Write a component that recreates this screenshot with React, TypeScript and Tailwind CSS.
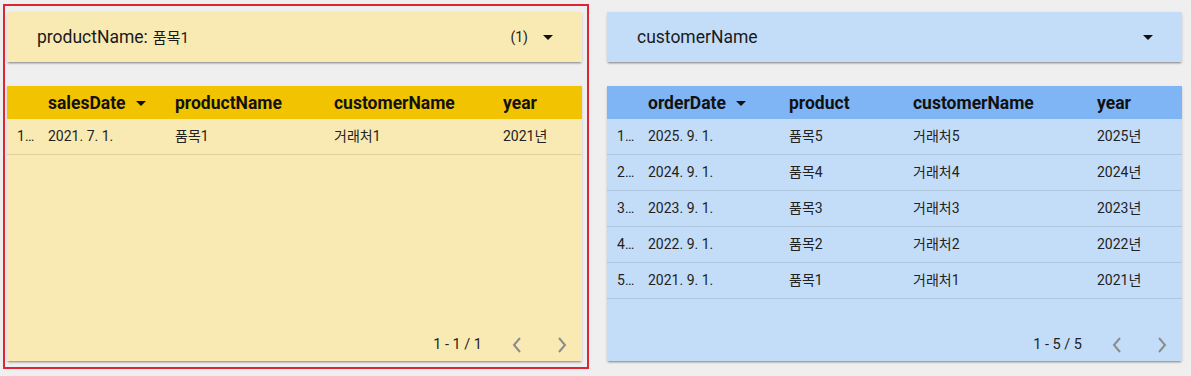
import React from "react";

type Col = { label: string; width: number; sort?: boolean };

const font = { fontFamily: "Roboto, 'Noto Sans CJK KR', sans-serif" };

function Caret({ className = "" }: { className?: string }) {
  return (
    <svg width="10" height="5" viewBox="0 0 10 5" className={className}>
      <path d="M0 0h10L5 5z" fill="#111" />
    </svg>
  );
}

function Chevron({ dir }: { dir: "left" | "right" }) {
  return (
    <svg width="10" height="16" viewBox="0 0 10 16">
      <path
        d={dir === "left" ? "M8 1L2 8l6 7" : "M2 1l6 7-6 7"}
        fill="none"
        stroke="#8c8c8c"
        strokeWidth="2"
      />
    </svg>
  );
}

function FilterCard({
  bg,
  label,
  value,
  count,
}: {
  bg: string;
  label: string;
  value?: string;
  count?: string;
}) {
  return (
    <div
      className={`w-[575px] h-[50px] flex items-center pl-[30px] pr-[29px] shadow-[0_2px_2px_-1px_rgba(0,0,0,0.4),0_1px_3px_rgba(0,0,0,0.1)] ${bg}`}
    >
      <span className="text-[17.5px] text-[#1a1a1a]">
        {label}
        {value && (
          <>
            :<span className="text-[15px] ml-[5px]">{value}</span>
          </>
        )}
      </span>
      <div className="ml-auto flex items-center gap-[15px]">
        {count && <span className="text-[14px] text-[#222]">{count}</span>}
        <Caret />
      </div>
    </div>
  );
}

function DataTable({
  bg,
  headBg,
  cols,
  rows,
  pageText,
}: {
  bg: string;
  headBg: string;
  cols: Col[];
  rows: string[][];
  pageText: string;
}) {
  return (
    <div
      className={`w-[575px] h-[275px] flex flex-col shadow-[0_2px_2px_-1px_rgba(0,0,0,0.4),0_1px_3px_rgba(0,0,0,0.1)] ${bg}`}
    >
      <div className={`h-[33px] pt-[1px] flex items-center ${headBg}`}>
        <div className="w-[41px] shrink-0" />
        {cols.map((c) => (
          <div
            key={c.label}
            style={{ width: c.width }}
            className="shrink-0 flex items-center gap-[10px] text-[17.5px] font-bold text-[#111]"
          >
            {c.label}
            {c.sort && <Caret />}
          </div>
        ))}
      </div>
      {rows.map((r, i) => (
        <div
          key={i}
          className="h-[36px] flex items-center border-b border-black/10 text-[14px] text-[#222]"
        >
          <div className="w-[41px] shrink-0 pl-[10px]">{i + 1}…</div>
          {r.map((v, j) => (
            <div key={j} style={{ width: cols[j].width }} className="shrink-0">
              {v}
            </div>
          ))}
        </div>
      ))}
      <div className="mt-auto h-[32px] flex items-center justify-end pr-[15px]">
        <span className="text-[14.5px] text-[#222] mr-[30px]">{pageText}</span>
        <Chevron dir="left" />
        <div className="w-[35px]" />
        <Chevron dir="right" />
      </div>
    </div>
  );
}

export default function App() {
  const leftCols: Col[] = [
    { label: "salesDate", width: 127, sort: true },
    { label: "productName", width: 159 },
    { label: "customerName", width: 169 },
    { label: "year", width: 79 },
  ];
  const rightCols: Col[] = [
    { label: "orderDate", width: 141, sort: true },
    { label: "product", width: 124 },
    { label: "customerName", width: 184 },
    { label: "year", width: 85 },
  ];
  const rightRows = [5, 4, 3, 2, 1].map((n) => [
    `${2020 + n}. 9. 1.`,
    `품목${n}`,
    `거래처${n}`,
    `${2020 + n}년`,
  ]);

  return (
    <div
      style={font}
      className="w-[1191px] h-[376px] bg-[#efefef] flex items-start pt-[4px] pl-[3px]"
    >
      <div className="w-[586px] border-2 border-[#dc2633] pl-[2px] pt-[6px] pb-[6px] flex flex-col gap-[24px]">
        <FilterCard bg="bg-[#f9eab3]" label="productName" value="품목1" count="(1)" />
        <DataTable
          bg="bg-[#f9eab3]"
          headBg="bg-[#f2c300]"
          cols={leftCols}
          rows={[["2021. 7. 1.", "품목1", "거래처1", "2021년"]]}
          pageText="1 - 1 / 1"
        />
      </div>
      <div className="ml-[18px] pt-[8px] flex flex-col gap-[24px]">
        <FilterCard bg="bg-[#c3ddf9]" label="customerName" />
        <DataTable
          bg="bg-[#c3ddf9]"
          headBg="bg-[#7fb4f5]"
          cols={rightCols}
          rows={rightRows}
          pageText="1 - 5 / 5"
        />
      </div>
    </div>
  );
}
